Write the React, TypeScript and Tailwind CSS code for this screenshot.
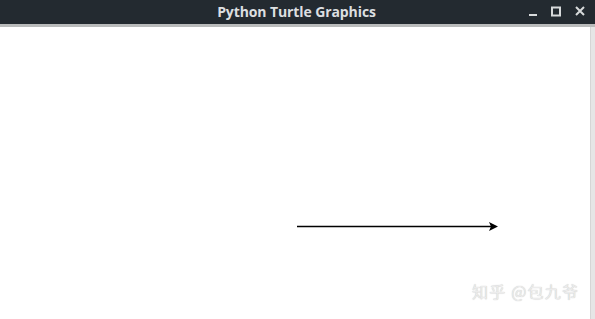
export default function App() {
  return (
    <main className="flex flex-col w-[595px] h-[319px] bg-white overflow-hidden font-['Open_Sans',sans-serif]">
      {/* title bar */}
      <header className="relative h-[24px] shrink-0 bg-[#232a30] flex items-center justify-center">
        <span className="text-[14px] font-bold text-[#dcdfe0] leading-none tracking-[-0.1px] ml-[-2px]">Python Turtle Graphics</span>
        <div className="absolute right-0 top-0 h-full flex items-center">
          <svg width="70" height="24" viewBox="0 0 70 24" className="text-[#d7dadb]">
            <rect x="4" y="14" width="8" height="2" fill="currentColor" />
            <rect x="27" y="7.5" width="8" height="8" fill="none" stroke="currentColor" strokeWidth="2" />
            <path d="M51 7 L59 15 M59 7 L51 15" stroke="currentColor" strokeWidth="2" />
          </svg>
        </div>
      </header>
      <div className="h-[3px] shrink-0 bg-[#b9bbbb]" />

      {/* canvas */}
      <section className="flex-1 flex">
        <div className="relative flex-1 bg-white">
          <svg width="590" height="292" className="absolute inset-0">
            <line x1="297" y1="199.5" x2="492" y2="199.5" stroke="#000" strokeWidth="1.3" />
            <path d="M489 195 L498 199.5 L489 204 L491 199.5 Z" fill="#000" />
          </svg>
          <div className="absolute left-[472px] top-[256px] text-[16px] tracking-[1.2px] leading-none text-[#ececec] font-['Noto_Sans_CJK_SC',sans-serif] [text-shadow:0_0_1px_#b8b8b8]">
            知乎 @包九爷
          </div>
        </div>
        <div className="w-[5px] bg-[#e6e6e6] border-l border-[#d6d6d6]" />
      </section>
    </main>
  );
}
